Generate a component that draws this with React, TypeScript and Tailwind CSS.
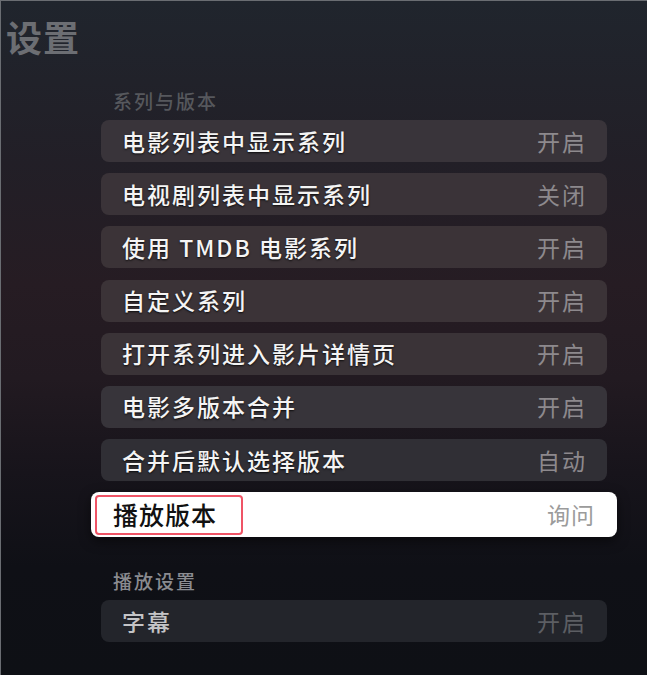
import React from 'react';

const rows = [
  { label: '电影列表中显示系列', value: '开启', bg: 'bg-[#39343a]' },
  { label: '电视剧列表中显示系列', value: '关闭', bg: 'bg-[#3a3338]' },
  { label: '使用 TMDB 电影系列', value: '开启', bg: 'bg-[#3b3337]' },
  { label: '自定义系列', value: '开启', bg: 'bg-[#3b3337]' },
  { label: '打开系列进入影片详情页', value: '开启', bg: 'bg-[#3a3337]' },
  { label: '电影多版本合并', value: '开启', bg: 'bg-[#37343a]' },
  { label: '合并后默认选择版本', value: '自动', bg: 'bg-[#302f35]' },
];

const font = { fontFamily: '"Noto Sans CJK SC", "Noto Sans", sans-serif' };

const App = () => {
  return (
    <div
      style={font}
      className="relative w-[647px] h-[675px] overflow-hidden border-t border-l border-[#6a6d72] bg-[linear-gradient(180deg,#20252d_0%,#221f27_24%,#261c23_42%,#221a21_56%,#17141b_70%,#0f1016_84%,#0e1015_100%)]"
    >
      {/* title */}
      <div className="pl-[5px] pt-[17px] text-[36px] leading-[36px] font-bold text-[#6c6e73] tracking-[1px]">
        设置
      </div>

      <div className="ml-[100px] w-[506px]">
        <div className="mt-[35px] pl-[12px] text-[19px] leading-[24px] font-medium tracking-[2px] text-[#56585d]">
          系列与版本
        </div>

        <div className="mt-[7px] flex flex-col gap-[11.2px]">
          {rows.map((r, i) => (
            <div
              key={i}
              className={`h-[42px] rounded-[8px] ${r.bg} flex items-center justify-between pl-[21px] pr-[20px]`}
            >
              <span className="text-[23px] leading-none font-medium tracking-[2px] text-[#f4f4f4] [text-shadow:0_1px_2px_rgba(0,0,0,0.8)]">
                {r.label}
              </span>
              <span className="text-[23px] leading-none tracking-[2px] text-[#8d898d]">{r.value}</span>
            </div>
          ))}
        </div>

        {/* focused row */}
        <div className="relative -mx-[10px] mt-[11px] h-[45px] rounded-[8px] bg-white flex items-center justify-between pl-[22px] pr-[22px] shadow-[0_4px_12px_rgba(0,0,0,0.5)]">
          <span className="text-[25px] leading-none font-medium tracking-[1px] text-[#111111]">播放版本</span>
          <span className="text-[23px] leading-none tracking-[1px] text-[#9b9b9b]">询问</span>
          <div className="absolute left-[4px] top-[3px] w-[148px] h-[40px] rounded-[4px] border-[2.5px] border-[#ef5466]" />
        </div>

        <div className="mt-[32px] pl-[12px] text-[19px] leading-[24px] font-medium tracking-[2px] text-[#8a8b90]">
          播放设置
        </div>

        <div className="mt-[7px] h-[42px] rounded-[8px] bg-[#23252b] flex items-center justify-between pl-[21px] pr-[20px]">
          <span className="text-[23px] leading-none font-medium tracking-[2px] text-[#c4c4c6]">字幕</span>
          <span className="text-[23px] leading-none tracking-[2px] text-[#5c5e63]">开启</span>
        </div>
      </div>
    </div>
  );
};

export default App;
